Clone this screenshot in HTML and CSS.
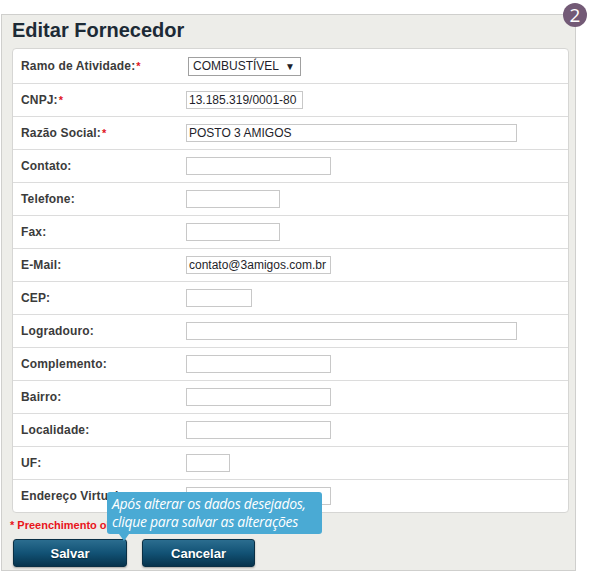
FILE: index.html
```html
<!DOCTYPE html>
<html lang="pt">
<head>
<meta charset="utf-8">
<title>Editar Fornecedor</title>
<link rel="stylesheet" href="styles.css">
</head>
<body>
<div class="panel">
  <h1 class="title">Editar Fornecedor</h1>
  <div class="card">
    <div class="row first">
      <span class="label">Ramo de Atividade:<span class="req">*</span></span>
      <div class="select"><span>COMBUSTÍVEL</span><span class="arrow">▼</span></div>
    </div>
    <div class="row">
      <span class="label">CNPJ:<span class="req">*</span></span>
      <div class="input w117">13.185.319/0001-80</div>
    </div>
    <div class="row">
      <span class="label">Razão Social:<span class="req">*</span></span>
      <div class="input w331">POSTO 3 AMIGOS</div>
    </div>
    <div class="row">
      <span class="label">Contato:</span>
      <div class="input w145"></div>
    </div>
    <div class="row">
      <span class="label">Telefone:</span>
      <div class="input w94"></div>
    </div>
    <div class="row">
      <span class="label">Fax:</span>
      <div class="input w94"></div>
    </div>
    <div class="row">
      <span class="label">E-Mail:</span>
      <div class="input w145">contato@3amigos.com.br</div>
    </div>
    <div class="row">
      <span class="label">CEP:</span>
      <div class="input w66"></div>
    </div>
    <div class="row">
      <span class="label">Logradouro:</span>
      <div class="input w331"></div>
    </div>
    <div class="row">
      <span class="label">Complemento:</span>
      <div class="input w145"></div>
    </div>
    <div class="row">
      <span class="label">Bairro:</span>
      <div class="input w145"></div>
    </div>
    <div class="row">
      <span class="label">Localidade:</span>
      <div class="input w145"></div>
    </div>
    <div class="row">
      <span class="label">UF:</span>
      <div class="input w44"></div>
    </div>
    <div class="row last">
      <span class="label">Endereço Virtual:</span>
      <div class="input w145"></div>
    </div>
  </div>
  <div class="note">* Preenchimento obrigatório</div>
  <div class="buttons">
    <button class="btn w114">Salvar</button>
    <button class="btn w113">Cancelar</button>
  </div>
</div>
<div class="tooltip">Após alterar os dados desejados,<br>clique para salvar as alterações</div>
<div class="badge">2</div>
</body>
</html>
```
FILE: styles.css
```css
* { box-sizing: border-box; }
html, body { margin: 0; padding: 0; background: #ffffff; }
body { font-family: "Liberation Sans", Arial, sans-serif; position: relative; width: 592px; height: 571px; overflow: hidden; }

.panel {
  margin: 14px 0 0 1px;
  width: 575px;
  height: 557px;
  background: #edede9;
  border: 1px solid #cfcfcd;
  padding: 4px 6px 0 10px;
}
.title {
  margin: 0;
  font-size: 20px;
  line-height: 22px;
  font-weight: bold;
  color: #1c2a36;
}
.card {
  margin-top: 7px;
  background: #ffffff;
  border: 1px solid #d6d6d4;
  border-radius: 4px;
  padding: 0 8px;
}
.row {
  display: flex;
  align-items: center;
  height: 33px;
  border-bottom: 1px solid #dcdcdc;
  margin: 0 -8px;
  padding: 0 8px;
}
.row.first { height: 35px; }
.row.last { height: 32px; border-bottom: none; }
.label {
  width: 165px;
  flex: none;
  font-size: 12px;
  font-weight: bold;
  letter-spacing: 0.15px;
  color: #3b3b3b;
}
.req { color: #e0141e; font-size: 11px; margin-left: 1px; }
.input {
  height: 18px;
  border: 1px solid #c8c8c8;
  font-size: 12px;
  line-height: 16px;
  color: #1e1e2a;
  padding-left: 2px;
  white-space: nowrap;
  overflow: hidden;
}
.w44 { width: 44px; }
.w66 { width: 66px; }
.w94 { width: 94px; }
.w117 { width: 117px; }
.w145 { width: 145px; }
.w331 { width: 331px; }
.select {
  margin-left: 2px;
  width: 113px;
  height: 19px;
  border: 1px solid #a0a0a0;
  font-size: 12px;
  line-height: 17px;
  color: #1e1e2a;
  padding: 0 5px 0 4px;
  display: flex;
  justify-content: space-between;
}
.select .arrow { font-size: 10px; }
.note {
  margin-top: 6px;
  height: 13px;
  font-size: 11px;
  line-height: 13px;
  font-weight: bold;
  color: #e8141b;
  margin-left: -2px;
}
.buttons {
  display: flex;
  gap: 15px;
  margin-top: 7px;
  padding-left: 1px;
}
.btn {
  height: 28px;
  border: 1px solid #0a2f44;
  border-radius: 3px;
  background: linear-gradient(#2b6d8f, #125275 50%, #06334c);
  color: #ffffff;
  font-family: "Liberation Sans", Arial, sans-serif;
  font-size: 13px;
  font-weight: bold;
  text-shadow: 0 1px 1px rgba(0,0,0,0.4);
  box-shadow: 0 1px 2px rgba(0,0,0,0.3);
  padding: 0;
}
.w113 { width: 113px; }
.w114 { width: 114px; }

.tooltip {
  position: absolute;
  left: 107px;
  top: 492px;
  width: 215px;
  height: 42px;
  background: #4aaad4;
  border-radius: 3px;
  color: #ffffff;
  font-family: "Open Sans", sans-serif;
  font-style: italic;
  font-size: 14px;
  letter-spacing: -0.3px;
  line-height: 18px;
  padding: 3px 0 0 5px;
  white-space: nowrap;
}
.tooltip::after {
  content: "";
  position: absolute;
  left: 12px;
  bottom: -7px;
  border-left: 5px solid transparent;
  border-right: 5px solid transparent;
  border-top: 7px solid #4aaad4;
}
.badge {
  position: absolute;
  left: 563px;
  top: 3px;
  width: 24px;
  height: 24px;
  border-radius: 50%;
  background: #735a76;
  color: #ffffff;
  font-family: "Open Sans", sans-serif;
  font-size: 19px;
  line-height: 24px;
  text-align: center;
}
```
